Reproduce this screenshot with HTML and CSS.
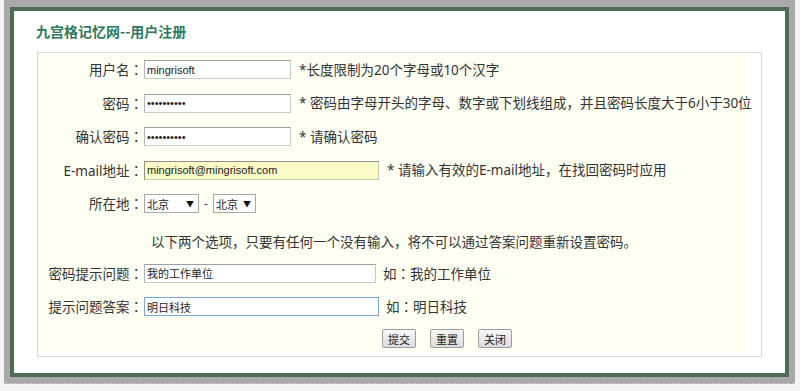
FILE: index.html
```html
<!DOCTYPE html>
<html lang="zh-CN">
<head>
    <meta charset="UTF-8">
    <meta name="viewport" content="width=device-width, initial-scale=1.0">
    <title>用户注册</title>
    <link rel="stylesheet" href="styles.css">
</head>
<body>
    <div class="mask">
        <div class="dialog">
            <h1 class="title">九宫格记忆网--用户注册</h1>
            <div class="panel">
                <form class="reg-form" action="#" method="post">
                    <div class="row">
                        <label for="user">用户名<span class="colon" lang="zh-TW">：</span></label>
                        <input class="txt" type="text" id="user" value="mingrisoft">
                        <span class="tip">*长度限制为20个字母或10个汉字</span>
                    </div>
                    <div class="row">
                        <label for="pwd">密码<span class="colon" lang="zh-TW">：</span></label>
                        <input class="txt" type="password" id="pwd" value="mingrisoft">
                        <span class="tip">* 密码由字母开头的字母、数字或下划线组成，并且密码长度大于6小于30位</span>
                    </div>
                    <div class="row">
                        <label for="pwd2">确认密码<span class="colon" lang="zh-TW">：</span></label>
                        <input class="txt" type="password" id="pwd2" value="mingrisoft">
                        <span class="tip">* 请确认密码</span>
                    </div>
                    <div class="row">
                        <label for="email">E-mail地址<span class="colon" lang="zh-TW">：</span></label>
                        <input class="txt txt-long txt-email" type="text" id="email" value="mingrisoft@mingrisoft.com">
                        <span class="tip">* 请输入有效的E-mail地址，在找回密码时应用</span>
                    </div>
                    <div class="row">
                        <label>所在地<span class="colon" lang="zh-TW">：</span></label>
                        <span class="sel sel-prov">北京<i>▼</i></span>
                        <span class="dash">-</span>
                        <span class="sel sel-city">北京<i>▼</i></span>
                    </div>
                    <div class="row note">以下两个选项，只要有任何一个没有输入，将不可以通过答案问题重新设置密码。</div>
                    <div class="row">
                        <label for="question">密码提示问题<span class="colon" lang="zh-TW">：</span></label>
                        <input class="txt txt-q" type="text" id="question" value="我的工作单位">
                        <span class="tip tip-q">如<span class="colon" lang="zh-TW">：</span>我的工作单位</span>
                    </div>
                    <div class="row">
                        <label for="answer">提示问题答案<span class="colon" lang="zh-TW">：</span></label>
                        <input class="txt txt-long txt-focus" type="text" id="answer" value="明日科技">
                        <span class="tip tip-q">如<span class="colon" lang="zh-TW">：</span>明日科技</span>
                    </div>
                    <div class="row btns">
                        <button type="button" class="btn">提交</button>
                        <button type="reset" class="btn">重置</button>
                        <button type="button" class="btn">关闭</button>
                    </div>
                </form>
            </div>
        </div>
    </div>
</body>
</html>
```

FILE: styles.css
```css
    body {
        margin: 0;
        padding: 0;
        background-color: #f4f4f4;
        font-family: "Noto Sans", "Noto Sans CJK SC", sans-serif;
        color: #333;
    }

    .mask {
        margin-left: 4px;
        width: 791px;
        height: 384px;
        box-sizing: border-box;
        padding: 7px 6px 0 6px;
        background-color: #a9a9a9;
        border-bottom: 1px dashed #c9c9c9;
    }

    .dialog {
        width: 779px;
        height: 370px;
        box-sizing: border-box;
        border: 4px solid #4f6c51;
        background-color: #fff;
        padding: 10px 23px 0 22px;
    }

    .title {
        margin: 0 0 11px 0;
        font-size: 14px;
        line-height: 20px;
        font-weight: bold;
        color: #2f7a5c;
        font-family: "Noto Sans CJK SC", sans-serif;
    }

    .panel {
        margin-left: 1px;
        width: 725px;
        height: 305px;
        box-sizing: border-box;
        border: 1px solid #d8d8d8;
        padding: 0 10px 4px 0;
        background-color: #fff;
    }

    .reg-form {
        height: 100%;
        background-color: #fffff4;
        font-size: 13.5px;
    }

    .row {
        display: flex;
        align-items: center;
        height: 33.5px;
    }

    .row label {
        width: 105px;
        text-align: right;
        flex-shrink: 0;
        line-height: 18px;
    }

    /* centred full-width colon, as on the original page */
    .colon {
        font-family: "Noto Sans CJK TC", sans-serif;
    }

    .txt {
        box-sizing: border-box;
        width: 147px;
        height: 19px;
        margin: 0 0 0 1px;
        padding: 0 2px;
        border: 1px solid #c6c9ce;
        border-top-color: #9a9ea5;
        border-left-color: #b4b7bd;
        background-color: #fff;
        font-family: "Liberation Sans", "Noto Sans CJK SC", sans-serif;
        font-size: 11px;
        color: #222;
        outline: none;
    }

    .txt-long {
        width: 235px;
    }

    .txt-q {
        width: 232px;
    }

    .txt-email {
        background-color: #fafbc6;
        border-color: #c9cbb0;
        border-top-color: #8e9088;
        border-left-color: #8e9088;
    }

    .txt-focus {
        border-color: #7ea6d6;
    }

    .tip {
        margin-left: 8px;
        line-height: 18px;
        white-space: nowrap;
    }

    .tip-q {
        margin-left: 7px;
    }

    .sel {
        box-sizing: border-box;
        height: 19px;
        margin-left: 1px;
        display: flex;
        align-items: center;
        justify-content: space-between;
        padding: 0 4px 0 2px;
        border: 1px solid #a8a8a8;
        background-color: #fff;
        font-family: "Noto Sans CJK SC", sans-serif;
        font-size: 11px;
        color: #222;
    }

    .sel i {
        font-style: normal;
        font-size: 8px;
        color: #111;
    }

    .sel-prov {
        width: 55px;
    }

    .sel-city {
        width: 43px;
        margin-left: 0;
    }

    .dash {
        width: 14px;
        text-align: center;
        font-size: 12px;
    }

    .note {
        height: 36px;
        padding: 4px 0 0 113px;
        box-sizing: border-box;
    }

    .btns {
        height: 30px;
        padding-left: 344px;
        gap: 14px;
    }

    .btn {
        box-sizing: border-box;
        width: 34px;
        height: 19px;
        padding: 0;
        border: 1px solid #9c9c9c;
        border-radius: 2px;
        background: linear-gradient(#f7f7f7, #dcdcdc);
        font-family: "Noto Sans CJK SC", sans-serif;
        font-size: 11px;
        color: #222;
        cursor: pointer;
    }
```
